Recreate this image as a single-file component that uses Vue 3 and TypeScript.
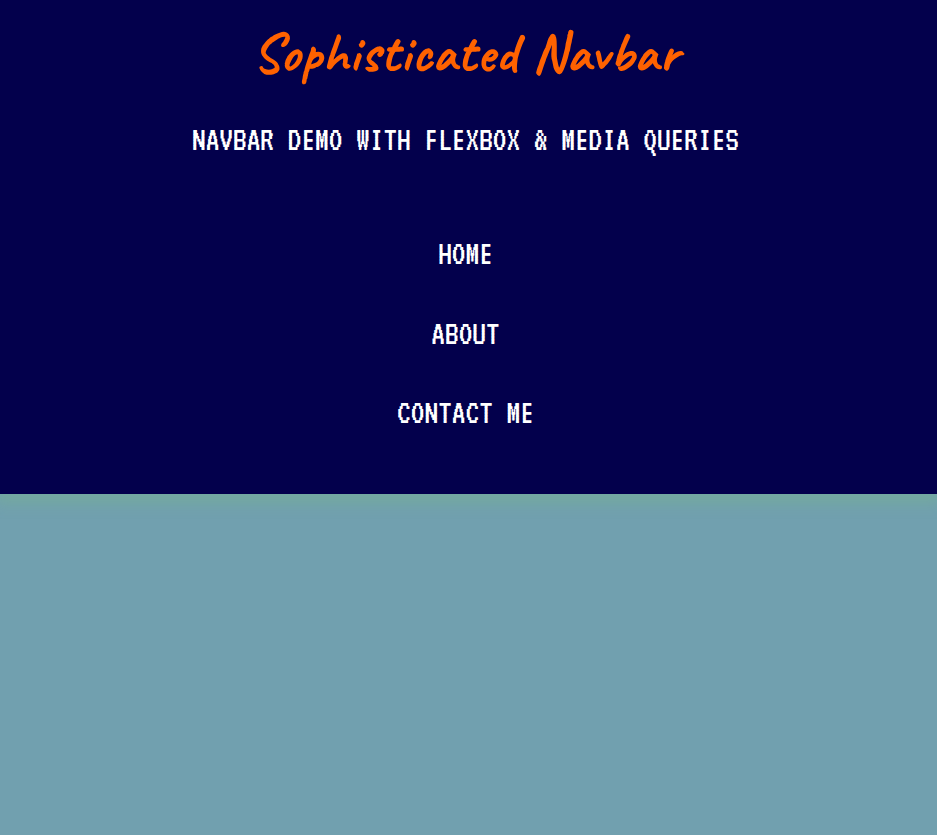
<script setup lang="ts">
const title = 'Sophisticated Navbar'
const subtitle = 'NAVBAR DEMO WITH FLEXBOX & MEDIA QUERIES'
const links: string[] = ['HOME', 'ABOUT', 'CONTACT ME']
</script>

<template>
  <div class="page">
    <header class="header">
      <h1 class="title">{{ title }}</h1>
      <p class="subtitle"><span class="terminal">{{ subtitle }}</span></p>
      <nav class="nav">
        <a v-for="link in links" :key="link" class="link"><span class="terminal">{{ link }}</span></a>
      </nav>
    </header>
  </div>
</template>

<style>
body {
  margin: 0;
  background: #71a0af;
}
</style>

<style scoped>
.page {
  min-height: 835px;
  background: #71a0af;
}
.header {
  box-sizing: border-box;
  height: 494px;
  background: #03004c;
  display: flex;
  flex-direction: column;
  align-items: center;
  box-shadow: 0 6px 12px 4px rgba(120, 180, 140, 0.4);
}
.title {
  margin: 23px 4px 0 0;
  height: 60px;
  font: 400 54.7px/60px Caveat, cursive;
  letter-spacing: 1.15px;
  -webkit-text-stroke: 1.6px #ff6200;
  color: #ff6200;
  white-space: nowrap;
}
.subtitle {
  margin: 37px 6px 0 0;
  height: 40px;
  white-space: nowrap;
}
.terminal {
  display: inline-block;
  font: 400 34.2px/40px VT323, "Liberation Mono", monospace;
  color: #fff;
}
.nav {
  display: flex;
  flex-direction: column;
  align-items: center;
  gap: 39.6px;
  margin: 74px 6px 0 0;
}
.link {
  height: 40px;
}
</style>
